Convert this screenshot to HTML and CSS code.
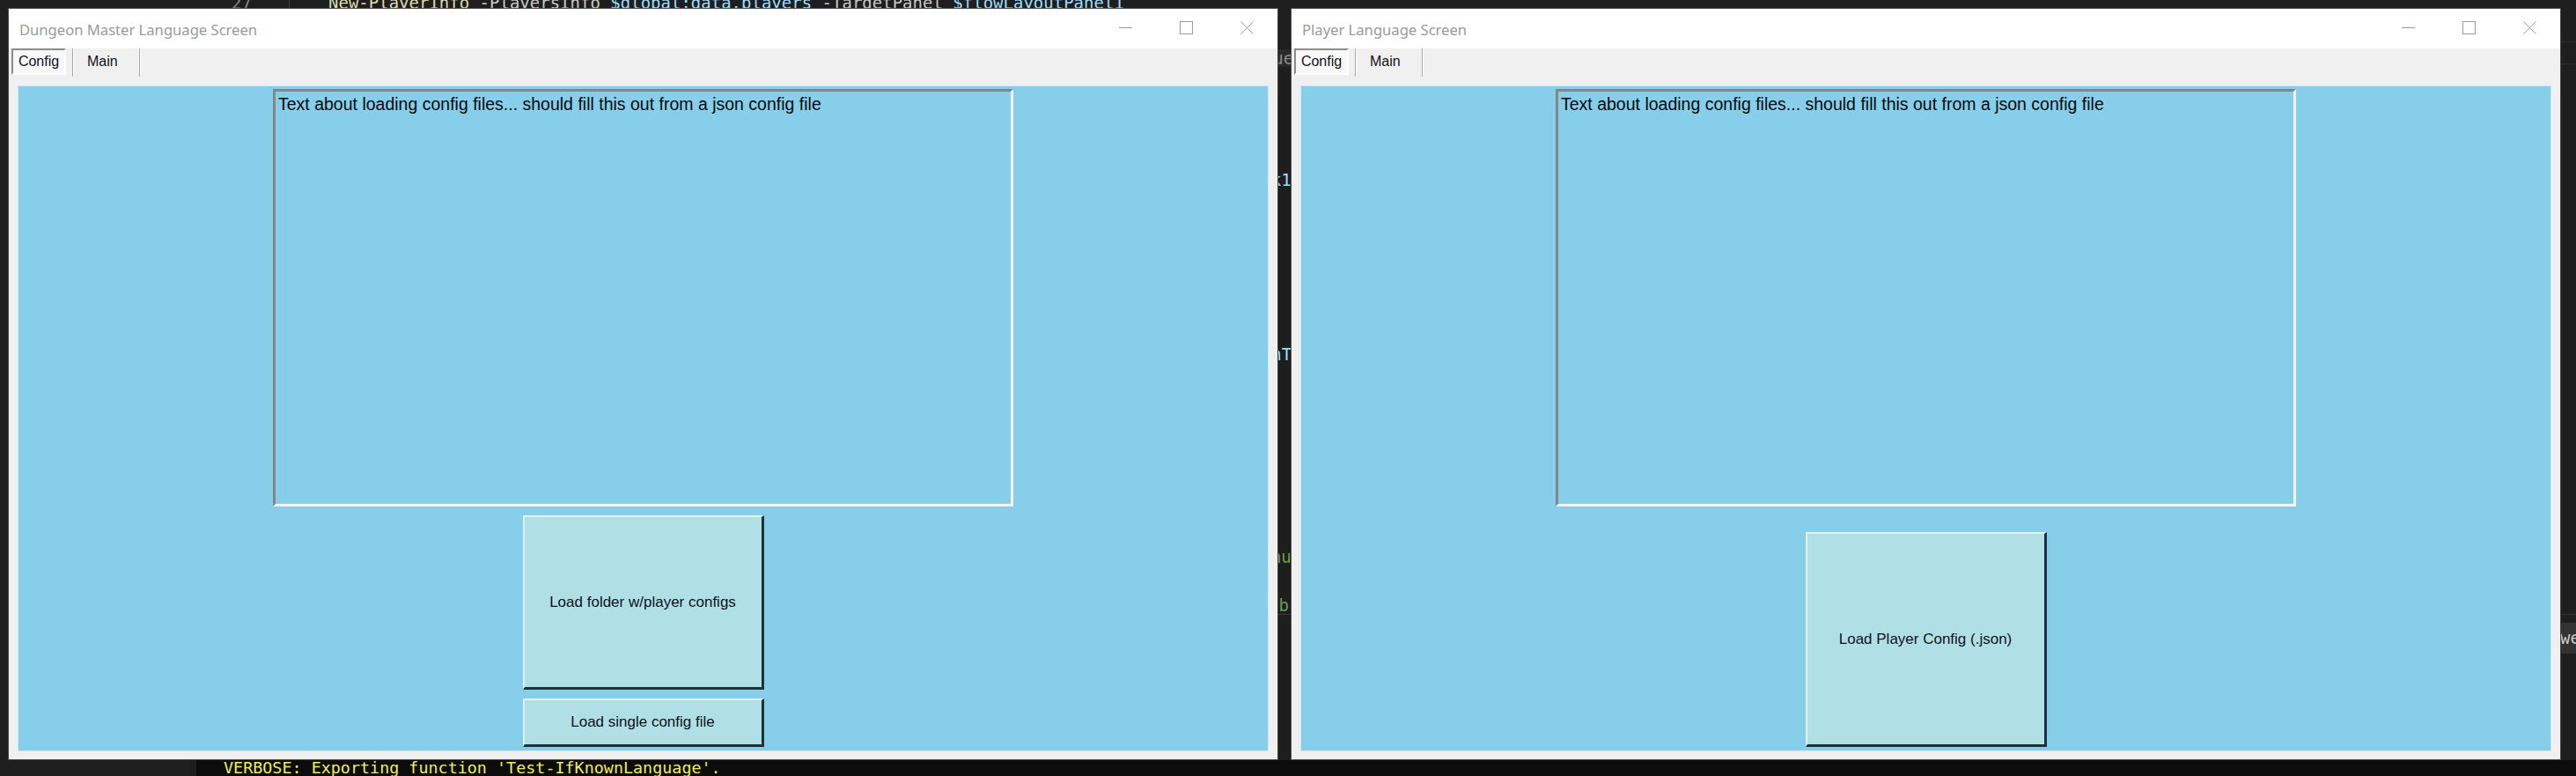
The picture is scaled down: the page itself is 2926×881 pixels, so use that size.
FILE: index.html
```html
<!DOCTYPE html>
<html lang="en">
<head>
<meta charset="utf-8">
<title>Language Screens</title>
<link rel="stylesheet" href="styles.css">
</head>
<body>
<div class="desktop">
  <div class="codeline">
    <span class="ln">27</span>
    <span class="gutter"></span>
    <span class="code"><span class="fn">New-PlayerInfo</span> <span class="param">-PlayersInfo</span> <span class="var">$global:data.players</span> <span class="param">-TargetPanel</span> <span class="var">$flowLayoutPanel1</span></span>
  </div>
  <div class="spacer"></div>
  <div class="terminal"><span class="term-text">VERBOSE: Exporting function 'Test-IfKnownLanguage'.</span></div>

  <span class="frag frag-ue">Value</span>
  <span class="frag frag-k1">Click1</span>
  <span class="frag frag-nt">ScreenT</span>
  <span class="frag frag-nu">menu</span>
  <span class="frag frag-b">ab</span>
  <span class="rule rule-gap"></span>
  <span class="rule rule-r1"></span>
  <span class="rule rule-r2"></span>
  <span class="rule rule-r3"></span>
  <span class="frag frag-we">we</span>

  <section class="window win-dm">
    <header class="titlebar">
      <span class="title">Dungeon Master Language Screen</span>
      <div class="caps">
        <span class="cap"><svg width="15" height="15" viewBox="0 0 15 15"><path d="M0 7.5H15" stroke="#9a9a9a" stroke-width="1"/></svg></span>
        <span class="cap"><svg width="15" height="15" viewBox="0 0 15 15"><rect x="0.5" y="0.5" width="14" height="14" fill="none" stroke="#9a9a9a"/></svg></span>
        <span class="cap"><svg width="15" height="15" viewBox="0 0 15 15"><path d="M0.5 0.5L14.5 14.5M14.5 0.5L0.5 14.5" stroke="#9a9a9a" stroke-width="1"/></svg></span>
      </div>
    </header>
    <nav class="tabstrip">
      <span class="tab-active">Config</span>
      <span class="sep"></span>
      <span class="tab">Main</span>
      <span class="sep sep2"></span>
    </nav>
    <div class="panel">
      <div class="textbox">Text about loading config files... should fill this out from a json config file</div>
      <button class="btn btn-folder">Load folder w/player configs</button>
      <button class="btn btn-single">Load single config file</button>
    </div>
  </section>

  <section class="window win-player">
    <header class="titlebar">
      <span class="title">Player Language Screen</span>
      <div class="caps">
        <span class="cap"><svg width="15" height="15" viewBox="0 0 15 15"><path d="M0 7.5H15" stroke="#9a9a9a" stroke-width="1"/></svg></span>
        <span class="cap"><svg width="15" height="15" viewBox="0 0 15 15"><rect x="0.5" y="0.5" width="14" height="14" fill="none" stroke="#9a9a9a"/></svg></span>
        <span class="cap"><svg width="15" height="15" viewBox="0 0 15 15"><path d="M0.5 0.5L14.5 14.5M14.5 0.5L0.5 14.5" stroke="#9a9a9a" stroke-width="1"/></svg></span>
      </div>
    </header>
    <nav class="tabstrip">
      <span class="tab-active">Config</span>
      <span class="sep"></span>
      <span class="tab">Main</span>
      <span class="sep sep2"></span>
    </nav>
    <div class="panel">
      <div class="textbox">Text about loading config files... should fill this out from a json config file</div>
      <button class="btn btn-player">Load Player Config (.json)</button>
    </div>
  </section>
</div>
</body>
</html>
```
FILE: styles.css
```css
html, body {
  margin: 0;
  padding: 0;
  background: #1e1e1e;
}

.desktop {
  position: relative;
  width: 2926px;
  height: 881px;
  overflow: hidden;
  background: #1e1e1e;
  display: flex;
  flex-direction: column;
}

/* editor line peeking above the windows */
.codeline {
  height: 9px;
  overflow: hidden;
  display: flex;
  align-items: flex-end;
  font-family: "DejaVu Sans Mono", "Liberation Mono", monospace;
  font-size: 19px;
  line-height: 19px;
  white-space: pre;
}
.codeline > span { margin-bottom: -4px; }
.ln { margin-left: 263px; color: #858585; width: 65px; }
.gutter { width: 1px; height: 19px; background: #404040; margin-right: 44px; }
.fn { color: #dcdcaa; }
.param { color: #c8c8c8; }
.var { color: #9cdcfe; }

.spacer { flex: 1; }

.terminal {
  height: 18px;
  display: flex;
  align-items: flex-start;
  background: linear-gradient(to right, #1e1e1e 0, #1e1e1e 223px, #0c0c0c 223px);
}
.term-text {
  margin-left: 254px;
  font-family: "DejaVu Sans Mono", "Liberation Mono", monospace;
  font-size: 18.4px;
  line-height: 18px;
  color: #eeee55;
  white-space: pre;
}

/* fragments of editor text visible between/around the windows */
.frag {
  position: absolute;
  font-family: "DejaVu Sans Mono", "Liberation Mono", monospace;
  font-size: 19px;
  line-height: 20px;
  white-space: pre;
}
.frag-ue { left: 1410px; top: 56px; color: #8a8a8a; background: #2a2a2a; padding: 0 2px; }
.frag-k1 { left: 1398px; top: 194px; color: #9cdcfe; }
.frag-nt { left: 1387px; top: 392px; color: #9cdcfe; }
.frag-nu { left: 1421px; top: 622px; color: #6a9955; }
.frag-b  { left: 1441px; top: 677px; color: #6a9955; }
.frag-we { left: 2904px; top: 707px; height: 35px; line-height: 35px; color: #cccccc; background: #333333; padding: 0 4px; }

.rule { position: absolute; height: 1px; background: #3a3a3a; }
.rule-gap { left: 1440px; width: 40px; top: 697px; }
.rule-r1 { left: 2900px; width: 26px; top: 47px; background: #2c2c2c; }
.rule-r2 { left: 2900px; width: 26px; top: 72px; background: #2c2c2c; }
.rule-r3 { left: 2900px; width: 26px; top: 697px; background: #333333; }

/* windows */
.window {
  position: absolute;
  top: 9px;
  width: 1443px;
  height: 854px;
  box-sizing: border-box;
  border: 1px solid #4a4a4a;
  background: #f0f0f0;
  display: flex;
  flex-direction: column;
}
.win-dm { left: 9px; }
.win-player { left: 1466px; }

.titlebar {
  height: 45px;
  flex: none;
  background: #ffffff;
  display: flex;
  align-items: center;
}
.title {
  flex: 1;
  padding-left: 12px;
  padding-top: 1px;
  font-family: "Noto Sans", "Open Sans", sans-serif;
  font-size: 16.6px;
  color: #9a9a9a;
  white-space: nowrap;
}
.caps {
  display: flex;
  align-self: stretch;
}
.cap {
  width: 69px;
  display: flex;
  align-items: center;
  justify-content: center;
}
.cap svg { display: block; margin-bottom: 2px; }

.tabstrip {
  height: 42px;
  flex: none;
  display: flex;
  align-items: flex-start;
  padding-left: 3px;
  font-family: "Liberation Sans", Arial, sans-serif;
  font-size: 16px;
  color: #111122;
}
.tab-active {
  width: 62px;
  height: 30px;
  box-sizing: border-box;
  border: 2px solid;
  border-color: #8c8c8c #ffffff #ffffff #8c8c8c;
  background: #f8f8f8;
  display: flex;
  align-items: center;
  justify-content: center;
}
.sep {
  width: 1px;
  height: 32px;
  background: #a8a8a8;
  border-right: 1px solid #ffffff;
  margin-left: 7px;
}
.tab {
  width: 59px;
  height: 30px;
  padding-left: 15px;
  display: flex;
  align-items: center;
}
.sep2 { margin-left: 0; }

.panel {
  flex: 1;
  margin: 0 10px 9px 10px;
  box-sizing: border-box;
  background: #87ceeb;
  border: 1px solid #cfe8f4;
  padding-top: 3px;
  display: flex;
  flex-direction: column;
  align-items: center;
}

.textbox {
  width: 841px;
  height: 474px;
  flex: none;
  box-sizing: border-box;
  border: 3px solid;
  border-color: #868686 #f4f4f4 #f4f4f4 #868686;
  background: #87ceeb;
  padding: 3px 3px;
  font-family: "Liberation Sans", Arial, sans-serif;
  font-size: 19.5px;
  line-height: 22px;
  color: #0a0a0a;
  white-space: nowrap;
}

.btn {
  width: 274px;
  flex: none;
  box-sizing: border-box;
  margin: 10px 0 0 0;
  padding: 0;
  background: #b0e0e6;
  border-style: solid;
  border-width: 2px 3px 3px 2px;
  border-color: #e2f3f5 #1b3336 #1b3336 #e2f3f5;
  font-family: "Liberation Sans", Arial, sans-serif;
  font-size: 17px;
  color: #111122;
  display: flex;
  align-items: center;
  justify-content: center;
}
.btn-folder { height: 198px; }
.btn-single { height: 55px; }
.btn-player { height: 244px; margin-top: 29px; }
```
